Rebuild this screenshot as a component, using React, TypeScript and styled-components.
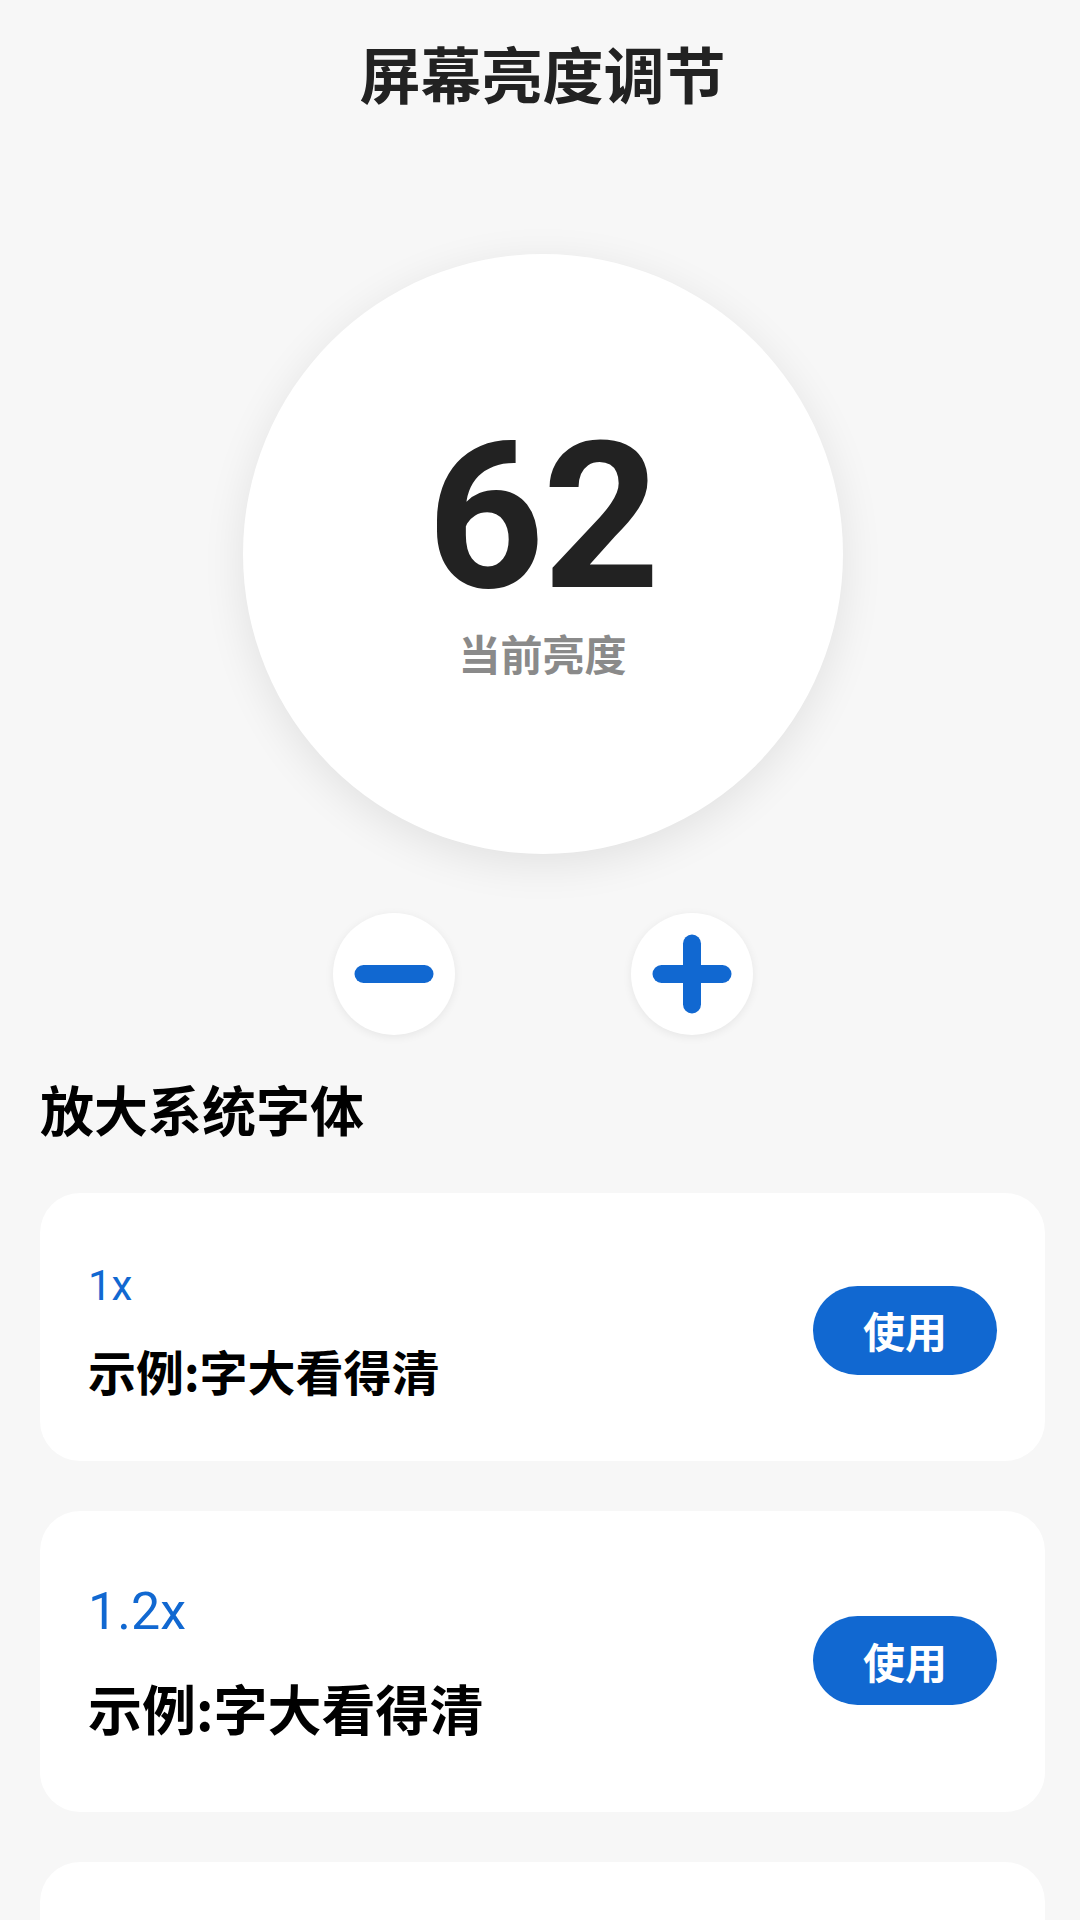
import React, { useState } from "react";
import styled, { createGlobalStyle } from "styled-components";

const GlobalStyle = createGlobalStyle`
  html, body {
    margin: 0;
    padding: 0;
    background: #f7f7f7;
  }
  body {
    font-family: "Noto Sans CJK SC", "Noto Sans", sans-serif;
  }
  * { box-sizing: border-box; }
`;

const Page = styled.div`
  width: 1080px;
  min-height: 1920px;
  overflow: hidden;
  background: #f7f7f7;
  padding: 37px 35px 60px 40px;
  display: flex;
  flex-direction: column;
`;

const Title = styled.h1`
  margin: 0;
  text-align: center;
  font-family: "Noto Sans CJK SC", sans-serif;
  font-size: 61px;
  line-height: 72px;
  font-weight: 700;
  color: #222222;
`;

const Dial = styled.div`
  align-self: center;
  margin-top: 145px;
  width: 600px;
  height: 600px;
  border-radius: 50%;
  background: #ffffff;
  box-shadow: 0 10px 44px rgba(0, 0, 0, 0.09);
  display: flex;
  flex-direction: column;
  align-items: center;
  justify-content: center;
  padding-bottom: 16px;
`;

const Value = styled.div`
  font-family: "Roboto", "Liberation Sans", sans-serif;
  font-weight: 700;
  font-size: 205px;
  line-height: 205px;
  color: #222222;
  letter-spacing: -2px;
`;

const ValueLabel = styled.div`
  margin-top: 8px;
  font-family: "Noto Sans CJK SC", sans-serif;
  font-size: 42px;
  line-height: 50px;
  font-weight: 700;
  color: #8a8a8a;
`;

const Controls = styled.div`
  margin-top: 59px;
  display: flex;
  justify-content: center;
  gap: 176px;
`;

const RoundButton = styled.button`
  width: 122px;
  height: 122px;
  border-radius: 50%;
  border: none;
  background: #ffffff;
  box-shadow: 0 2px 10px rgba(0, 0, 0, 0.07);
  display: flex;
  align-items: center;
  justify-content: center;
  padding: 0;
  cursor: pointer;
`;

const SectionTitle = styled.h2`
  margin: 42px 0 0 0;
  font-family: "Noto Sans CJK SC", sans-serif;
  font-size: 54px;
  line-height: 64px;
  font-weight: 700;
  color: #000000;
`;

const CardList = styled.div`
  margin-top: 52px;
  display: flex;
  flex-direction: column;
  gap: 50px;
`;

const Card = styled.div<{ $padTop: number; $padBottom: number }>`
  background: #ffffff;
  border-radius: 40px;
  padding: ${(p) => p.$padTop}px 48px ${(p) => p.$padBottom}px 48px;
  display: flex;
  align-items: center;
  justify-content: space-between;
`;

const CardText = styled.div<{ $gap: number }>`
  display: flex;
  flex-direction: column;
  gap: ${(p) => p.$gap}px;
`;

const ScaleLabel = styled.div<{ $size: number }>`
  font-family: "Roboto", "Liberation Sans", sans-serif;
  font-weight: 400;
  font-size: ${(p) => p.$size}px;
  line-height: ${(p) => Math.round(p.$size * 1.2)}px;
  color: #1168d1;
`;

const Sample = styled.div<{ $size: number }>`
  font-family: "Noto Sans CJK SC", sans-serif;
  font-weight: 700;
  font-size: ${(p) => p.$size}px;
  line-height: ${(p) => Math.round(p.$size * 1.2)}px;
  color: #000000;
`;

const UseButton = styled.button`
  width: 184px;
  height: 89px;
  border-radius: 45px;
  border: none;
  background: #1168d1;
  color: #ffffff;
  font-family: "Noto Sans CJK SC", sans-serif;
  font-weight: 700;
  font-size: 42px;
  line-height: 1;
  display: flex;
  align-items: center;
  justify-content: center;
  flex-shrink: 0;
  cursor: pointer;
`;

const MinusIcon = () => (
  <svg width="80" height="80" viewBox="0 0 80 80">
    <line x1="9.5" y1="40" x2="70.5" y2="40" stroke="#1168d1" strokeWidth="18" strokeLinecap="round" />
  </svg>
);

const PlusIcon = () => (
  <svg width="80" height="80" viewBox="0 0 80 80">
    <line x1="9.5" y1="40" x2="70.5" y2="40" stroke="#1168d1" strokeWidth="18" strokeLinecap="round" />
    <line x1="40" y1="9.5" x2="40" y2="70.5" stroke="#1168d1" strokeWidth="18" strokeLinecap="round" />
  </svg>
);

const scales = [
  { label: "1x", labelSize: 42, sampleSize: 48, gap: 30, padTop: 68, padBottom: 62 },
  { label: "1.2x", labelSize: 52, sampleSize: 54, gap: 32, padTop: 70, padBottom: 72 },
  { label: "1.4x", labelSize: 60, sampleSize: 60, gap: 36, padTop: 76, padBottom: 78 },
];

export default function App() {
  const [brightness, setBrightness] = useState(62);
  return (
    <>
      <GlobalStyle />
      <Page>
        <Title>屏幕亮度调节</Title>
        <Dial>
          <Value>{brightness}</Value>
          <ValueLabel>当前亮度</ValueLabel>
        </Dial>
        <Controls>
          <RoundButton aria-label="降低亮度" onClick={() => setBrightness((b) => Math.max(0, b - 1))}>
            <MinusIcon />
          </RoundButton>
          <RoundButton aria-label="提高亮度" onClick={() => setBrightness((b) => Math.min(100, b + 1))}>
            <PlusIcon />
          </RoundButton>
        </Controls>
        <SectionTitle>放大系统字体</SectionTitle>
        <CardList>
          {scales.map((s) => (
            <Card key={s.label} $padTop={s.padTop} $padBottom={s.padBottom}>
              <CardText $gap={s.gap}>
                <ScaleLabel $size={s.labelSize}>{s.label}</ScaleLabel>
                <Sample $size={s.sampleSize}>示例:字大看得清</Sample>
              </CardText>
              <UseButton>使用</UseButton>
            </Card>
          ))}
        </CardList>
      </Page>
    </>
  );
}
